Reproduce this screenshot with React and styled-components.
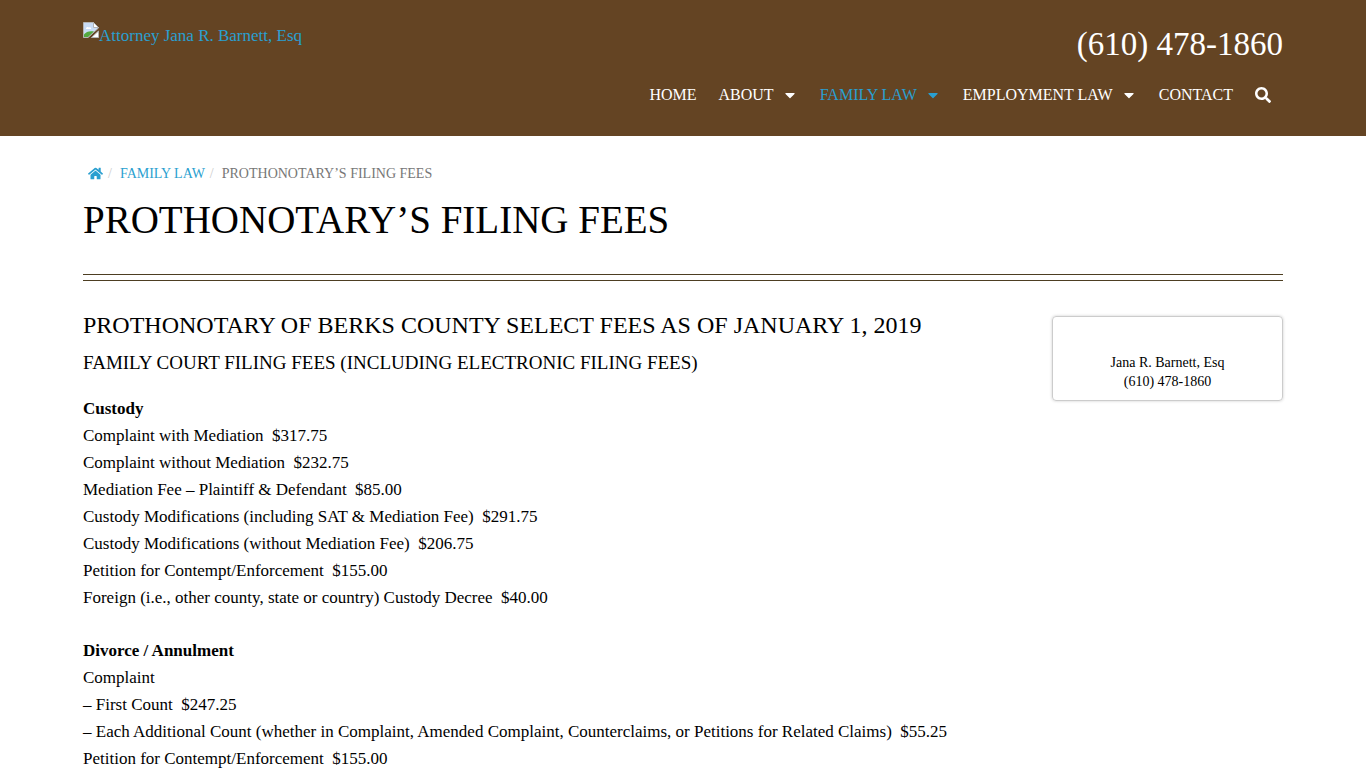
import React from "react"
import styled, { createGlobalStyle } from "styled-components"
import { FaCaretDown, FaHome, FaSearch } from "react-icons/fa"

const GlobalStyle = createGlobalStyle`
  * {
    box-sizing: border-box;
  }

  body {
    margin: 0;
    background: #fff;
    color: #000;
    font-family: "Liberation Serif", "Times New Roman", serif;
    font-size: 17px;
    line-height: 27px;
  }

  a {
    color: #2a9fd0;
    text-decoration: none;
  }
`

const Container = styled.div`
  max-width: 1230px;
  margin: 0 auto;
  padding: 0 15px;
`

const Header = styled.header`
  background-color: #644423;
  padding: 22px 0 26px;
`

const HeaderRow = styled(Container)`
  display: flex;
  justify-content: space-between;
  align-items: flex-start;
`

const Brand = styled.a`
  display: flex;
  align-items: flex-start;
`

const HeaderRight = styled.div`
  display: flex;
  flex-direction: column;
  align-items: flex-end;
`

const Phone = styled.a`
  color: #fff;
  font-size: 33px;
  line-height: 44px;
`

const Nav = styled.nav`
  display: flex;
  margin-top: 14px;
  padding-right: 1px;
`

const NavLink = styled.a`
  display: flex;
  align-items: center;
  gap: 8px;
  padding: 0 11px;
  font-size: 16px;
  line-height: 30px;
  color: ${({ $active }) => ($active ? "#2a9fd0" : "#fff")};
`

const SearchButton = styled.button`
  display: flex;
  align-items: center;
  padding: 0 11px;
  border: 0;
  background: none;
  color: #fff;
  font-size: 16px;
  cursor: pointer;
`

const Breadcrumbs = styled.ol`
  display: flex;
  align-items: center;
  list-style: none;
  margin: 0;
  padding: 27px 0 0 5px;
  font-size: 14px;
  line-height: 21px;
  text-transform: uppercase;
  color: #777;
`

const Crumb = styled.li`
  display: flex;
  align-items: center;

  & + &::before {
    content: "/";
    padding: 0 8px 0 5px;
    color: #ccc;
  }

  a {
    display: flex;
  }
`

const PageTitle = styled.h1`
  margin: 12px 0 30px;
  font-size: 39px;
  font-weight: 400;
  line-height: 48px;
  text-transform: uppercase;
`

const Rule = styled.hr`
  height: 7px;
  margin: 0;
  border: solid #4d3e22;
  border-width: 1px 0;
`

const Columns = styled.div`
  display: flex;
  align-items: flex-start;
  justify-content: space-between;
  gap: 30px;
  padding-top: 30px;
`

const Article = styled.main`
  flex: 1;
`

const Heading = styled.h2`
  margin: 0;
  font-size: 24px;
  font-weight: 400;
  line-height: 28px;
  text-transform: uppercase;
`

const SubHeading = styled.h3`
  margin: 12px 0 20px;
  font-size: 19px;
  font-weight: 400;
  line-height: 24px;
  text-transform: uppercase;
`

const FeeGroup = styled.p`
  margin: 0 0 26px;
`

const ContactCard = styled.aside`
  flex: 0 0 231px;
  margin-top: 5px;
  padding: 36px 12px 9px;
  border: 1px solid #ccc;
  border-radius: 4px;
  box-shadow: 0 0 3px #ccc;
  font-size: 14px;
  line-height: 19px;
  text-align: center;
`

const NAV_ITEMS = [
  { label: "HOME" },
  { label: "ABOUT", menu: true },
  { label: "FAMILY LAW", menu: true, active: true },
  { label: "EMPLOYMENT LAW", menu: true },
  { label: "CONTACT" },
]

const FEES = [
  {
    title: "Custody",
    lines: [
      "Complaint with Mediation \u00a0$317.75",
      "Complaint without Mediation \u00a0$232.75",
      "Mediation Fee – Plaintiff & Defendant \u00a0$85.00",
      "Custody Modifications (including SAT & Mediation Fee) \u00a0$291.75",
      "Custody Modifications (without Mediation Fee) \u00a0$206.75",
      "Petition for Contempt/Enforcement \u00a0$155.00",
      "Foreign (i.e., other county, state or country) Custody Decree \u00a0$40.00",
    ],
  },
  {
    title: "Divorce / Annulment",
    lines: [
      "Complaint",
      "– First Count \u00a0$247.25",
      "– Each Additional Count (whether in Complaint, Amended Complaint, Counterclaims, or Petitions for Related Claims) \u00a0$55.25",
      "Petition for Contempt/Enforcement \u00a0$155.00",
    ],
  },
]

function BrokenImage() {
  return (
    <svg width="16" height="16" viewBox="0 0 16 16" aria-hidden="true">
      <path d="M0.5 0.5H10.5L15.5 5.5V6L5 15.5H0.5Z" fill="#c9dcf5" stroke="#b5b5b5" />
      <path d="M10.5 0.5V5.5H15.5Z" fill="#fff" stroke="#b5b5b5" />
      <path d="M3 6.5C3 5 5 4.5 6 5.5C7.5 5 8.5 6 8 7H3Z" fill="#fff" />
      <path d="M1 15V12.5C3 9.500 7 8.500 11 9.500L5 15Z" fill="#53a93f" />
      <path d="M15.500 9V15.500H8.500Z" fill="#fff" stroke="#b5b5b5" />
    </svg>
  )
}

export default function App() {
  return (
    <>
      <GlobalStyle />
      <Header>
        <HeaderRow>
          <Brand href="#">
            <BrokenImage />
            Attorney Jana R. Barnett, Esq
          </Brand>
          <HeaderRight>
            <Phone href="tel:6104781860">(610) 478-1860</Phone>
            <Nav>
              {NAV_ITEMS.map(({ label, menu, active }) => (
                <NavLink href="#" key={label} $active={active}>
                  {label}
                  {menu && <FaCaretDown />}
                </NavLink>
              ))}
              <SearchButton type="button" aria-label="Search">
                <FaSearch />
              </SearchButton>
            </Nav>
          </HeaderRight>
        </HeaderRow>
      </Header>
      <Container>
        <Breadcrumbs>
          <Crumb>
            <a href="#" aria-label="Home">
              <FaHome size={15} />
            </a>
          </Crumb>
          <Crumb>
            <a href="#">Family Law</a>
          </Crumb>
          <Crumb>Prothonotary’s Filing Fees</Crumb>
        </Breadcrumbs>
        <PageTitle>Prothonotary’s Filing Fees</PageTitle>
        <Rule />
        <Columns>
          <Article>
            <Heading>Prothonotary of Berks County Select Fees as of January 1, 2019</Heading>
            <SubHeading>Family Court Filing Fees (Including Electronic Filing Fees)</SubHeading>
            {FEES.map(({ title, lines }) => (
              <FeeGroup key={title}>
                <strong>{title}</strong>
                {lines.map((line) => (
                  <React.Fragment key={line}>
                    <br />
                    {line}
                  </React.Fragment>
                ))}
              </FeeGroup>
            ))}
          </Article>
          <ContactCard>
            Jana R. Barnett, Esq
            <br />
            (610) 478-1860
          </ContactCard>
        </Columns>
      </Container>
    </>
  )
}
